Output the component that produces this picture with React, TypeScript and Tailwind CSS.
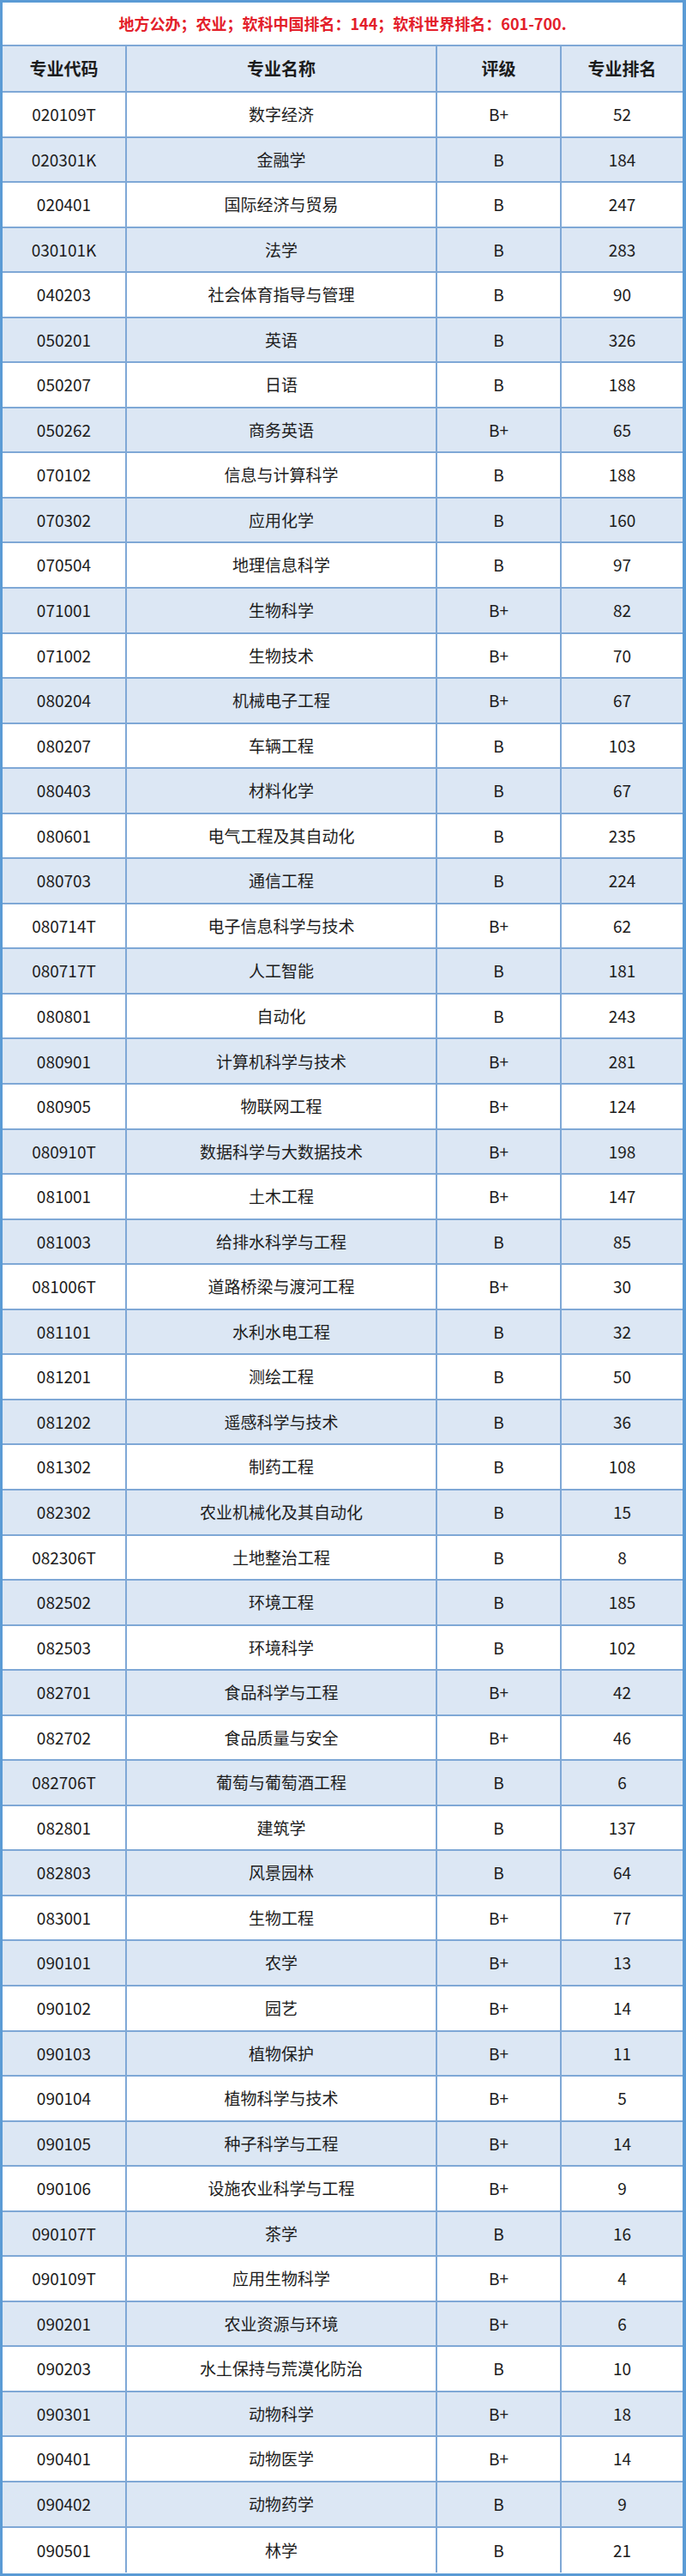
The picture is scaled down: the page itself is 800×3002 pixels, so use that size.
const rows: [string, string, string, string][] = [
  ["020109T", "数字经济", "B+", "52"],
  ["020301K", "金融学", "B", "184"],
  ["020401", "国际经济与贸易", "B", "247"],
  ["030101K", "法学", "B", "283"],
  ["040203", "社会体育指导与管理", "B", "90"],
  ["050201", "英语", "B", "326"],
  ["050207", "日语", "B", "188"],
  ["050262", "商务英语", "B+", "65"],
  ["070102", "信息与计算科学", "B", "188"],
  ["070302", "应用化学", "B", "160"],
  ["070504", "地理信息科学", "B", "97"],
  ["071001", "生物科学", "B+", "82"],
  ["071002", "生物技术", "B+", "70"],
  ["080204", "机械电子工程", "B+", "67"],
  ["080207", "车辆工程", "B", "103"],
  ["080403", "材料化学", "B", "67"],
  ["080601", "电气工程及其自动化", "B", "235"],
  ["080703", "通信工程", "B", "224"],
  ["080714T", "电子信息科学与技术", "B+", "62"],
  ["080717T", "人工智能", "B", "181"],
  ["080801", "自动化", "B", "243"],
  ["080901", "计算机科学与技术", "B+", "281"],
  ["080905", "物联网工程", "B+", "124"],
  ["080910T", "数据科学与大数据技术", "B+", "198"],
  ["081001", "土木工程", "B+", "147"],
  ["081003", "给排水科学与工程", "B", "85"],
  ["081006T", "道路桥梁与渡河工程", "B+", "30"],
  ["081101", "水利水电工程", "B", "32"],
  ["081201", "测绘工程", "B", "50"],
  ["081202", "遥感科学与技术", "B", "36"],
  ["081302", "制药工程", "B", "108"],
  ["082302", "农业机械化及其自动化", "B", "15"],
  ["082306T", "土地整治工程", "B", "8"],
  ["082502", "环境工程", "B", "185"],
  ["082503", "环境科学", "B", "102"],
  ["082701", "食品科学与工程", "B+", "42"],
  ["082702", "食品质量与安全", "B+", "46"],
  ["082706T", "葡萄与葡萄酒工程", "B", "6"],
  ["082801", "建筑学", "B", "137"],
  ["082803", "风景园林", "B", "64"],
  ["083001", "生物工程", "B+", "77"],
  ["090101", "农学", "B+", "13"],
  ["090102", "园艺", "B+", "14"],
  ["090103", "植物保护", "B+", "11"],
  ["090104", "植物科学与技术", "B+", "5"],
  ["090105", "种子科学与工程", "B+", "14"],
  ["090106", "设施农业科学与工程", "B+", "9"],
  ["090107T", "茶学", "B", "16"],
  ["090109T", "应用生物科学", "B+", "4"],
  ["090201", "农业资源与环境", "B+", "6"],
  ["090203", "水土保持与荒漠化防治", "B", "10"],
  ["090301", "动物科学", "B+", "18"],
  ["090401", "动物医学", "B+", "14"],
  ["090402", "动物药学", "B", "9"],
  ["090501", "林学", "B", "21"],
];

const font = { fontFamily: '"Liberation Sans Narrow", "Noto Sans CJK SC", sans-serif' };

function Row({ cells, blue, last, head }: { cells: string[]; blue: boolean; last?: boolean; head?: boolean }) {
  return (
    <div
      className={`grid grid-cols-[143px_362px_145px_1fr] ${head ? "h-[54px]" : "h-[52.55px]"} ${last ? "" : "border-b-2"} border-[#7fa8d6] ${blue ? "bg-[#dce7f4]" : "bg-white"}`}
    >
      {cells.map((c, i) => (
        <div
          key={i}
          className={`flex items-center justify-center ${i > 0 ? "border-l-2 border-[#7fa8d6]" : ""} ${head ? "font-bold text-[20px]" : "text-[19px]"} text-[#1c1c1c]`}
        >
          {c}
        </div>
      ))}
    </div>
  );
}

export default function App() {
  return (
    <main className="w-[800px] h-[3002px] bg-white" style={font}>
      <div className="h-full border-[3px] border-r-4 border-[#5b9bd5] flex flex-col">
        <div className="h-[51px] shrink-0 border-b-2 border-[#7fa8d6] flex items-center justify-center">
          <p className="text-[18px] font-bold text-[#e3202a]">地方公办；农业；软科中国排名：144；软科世界排名：601-700.</p>
        </div>
        <Row head blue cells={["专业代码", "专业名称", "评级", "专业排名"]} />
        {rows.map((r, i) => (
          <Row key={r[0]} cells={r} blue={i % 2 === 1} last={i === rows.length - 1} />
        ))}
      </div>
    </main>
  );
}
